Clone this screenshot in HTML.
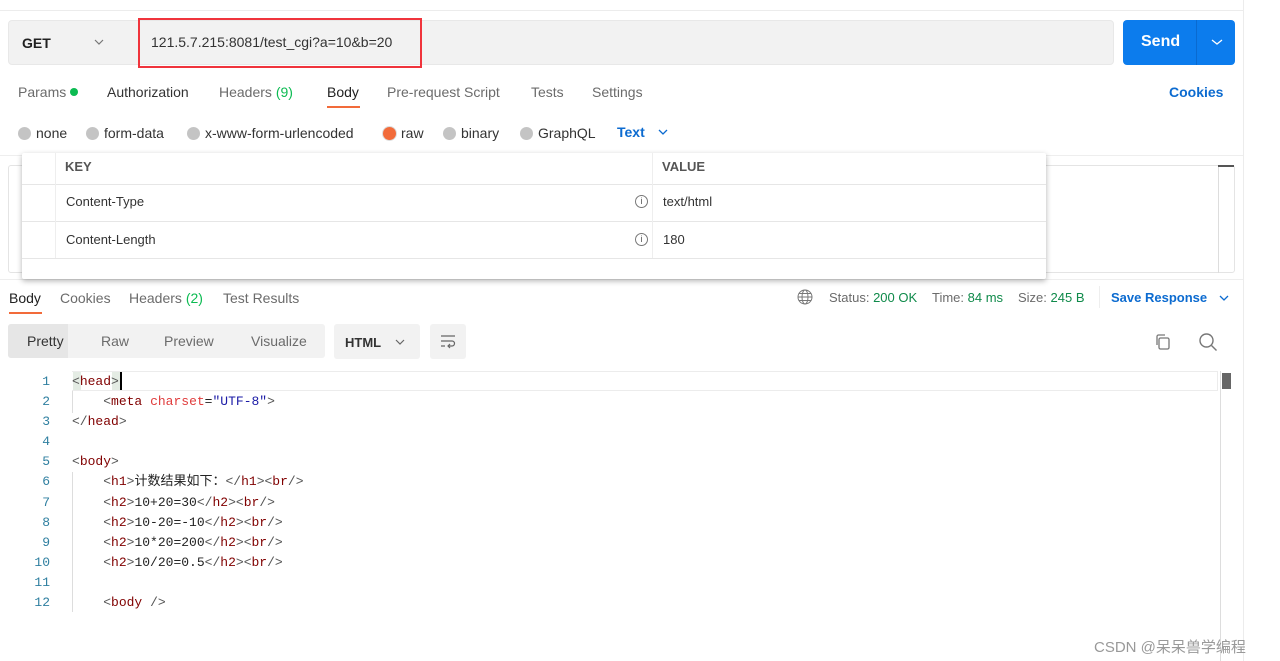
<!DOCTYPE html>
<html><head><meta charset="utf-8"><style>
*{margin:0;padding:0;box-sizing:border-box}
body{width:1280px;height:661px;background:#fff;font-family:"Liberation Sans",sans-serif;font-size:13px;color:#212121;position:relative;overflow:hidden}
.a{position:absolute;white-space:nowrap}
.g{color:#6b6b6b}
.mono{font-family:"Liberation Mono","Noto Sans CJK SC",monospace;font-size:13px}
.dot{display:inline-block;width:13px;height:13px;border-radius:50%;background:#c4c4c4;vertical-align:-2px;margin-right:5px}
.tag{color:#800000}
.p{color:#555}
</style></head><body>
<div class="a" style="left:0;top:10px;width:1243px;height:1px;background:#ececec"></div>
<div class="a" style="left:1243px;top:0;width:1px;height:661px;background:#ececec"></div>
<!-- URL bar -->
<div class="a" style="left:8px;top:20px;width:1106px;height:45px;background:#f2f2f2;border:1px solid #e8e8e8;border-radius:4px"></div>
<div class="a" style="left:22px;top:35px;font-weight:bold;font-size:14px;color:#212121">GET</div>
<svg class="a" style="left:94px;top:38px" width="10" height="8"><path d="M1 2l4 4 4-4" fill="none" stroke="#777" stroke-width="1.2"/></svg>
<div class="a" style="left:138px;top:18px;width:284px;height:50px;border:2px solid #f0343c"></div>
<div class="a" style="left:151px;top:34px;font-size:14px;color:#333">121.5.7.215:8081/test_cgi?a=10&amp;b=20</div>
<div class="a" style="left:1123px;top:20px;width:112px;height:45px;background:#0c7ced;border-radius:4px"></div>
<div class="a" style="left:1196px;top:20px;width:1px;height:45px;background:#0a6ad0"></div>
<div class="a" style="left:1141px;top:33px;font-size:16px;font-weight:bold;color:#fff">Send</div>
<svg class="a" style="left:1211px;top:38px" width="12" height="8"><path d="M1 2l5 4 5-4" fill="none" stroke="#fff" stroke-width="1.3"/></svg>
<!-- tabs -->
<div class="a g" style="left:18px;top:84px;font-size:14px">Params <span style="display:inline-block;width:8px;height:8px;border-radius:50%;background:#0cbb52;vertical-align:1px"></span></div>
<div class="a" style="left:107px;top:84px;font-size:14px;color:#333">Authorization</div>
<div class="a g" style="left:219px;top:84px;font-size:14px">Headers <span style="color:#0cbb52">(9)</span></div>
<div class="a" style="left:327px;top:84px;font-size:14px;color:#212121">Body</div>
<div class="a" style="left:327px;top:106px;width:33px;height:2px;background:#f26b3a"></div>
<div class="a g" style="left:387px;top:84px;font-size:14px">Pre-request Script</div>
<div class="a g" style="left:531px;top:84px;font-size:14px">Tests</div>
<div class="a g" style="left:592px;top:84px;font-size:14px">Settings</div>
<div class="a" style="left:1169px;top:84px;font-size:14px;color:#0c6bd0;font-weight:bold">Cookies</div>
<!-- body types -->
<div class="a" style="left:18px;top:125px;font-size:14px;color:#333"><span class="dot"></span>none</div>
<div class="a" style="left:86px;top:125px;font-size:14px;color:#333"><span class="dot"></span>form-data</div>
<div class="a" style="left:187px;top:125px;font-size:14px;color:#333"><span class="dot"></span>x-www-form-urlencoded</div>
<div class="a" style="left:383px;top:125px;font-size:14px;color:#333"><span class="dot" style="background:#f26b3a;box-shadow:0 0 0 1px #ddd"></span>raw</div>
<div class="a" style="left:443px;top:125px;font-size:14px;color:#333"><span class="dot"></span>binary</div>
<div class="a" style="left:520px;top:125px;font-size:14px;color:#333"><span class="dot"></span>GraphQL</div>
<div class="a" style="left:617px;top:124px;font-size:14px;color:#0c6bd0;font-weight:bold">Text</div>
<svg class="a" style="left:658px;top:128px" width="10" height="8"><path d="M1 2l4 4 4-4" fill="none" stroke="#0c6bd0" stroke-width="1.3"/></svg>
<div class="a" style="left:0;top:155px;width:1243px;height:1px;background:#eee"></div>
<!-- editor bg -->
<div class="a" style="left:8px;top:165px;width:1227px;height:108px;border:1px solid #e4e4e4;border-radius:3px"></div>
<div class="a" style="left:1218px;top:165px;width:1px;height:108px;background:#ddd"></div>
<div class="a" style="left:1218px;top:165px;width:16px;height:2px;background:#555"></div>
<div class="a" style="left:0;top:279px;width:1243px;height:1px;background:#eee"></div>
<!-- popup table -->
<div class="a" style="left:22px;top:153px;width:1024px;height:126px;background:#fff;box-shadow:0 2px 6px rgba(0,0,0,.3);border-radius:2px"></div>
<div class="a" style="left:22px;top:184px;width:1024px;height:1px;background:#e6e6e6"></div>
<div class="a" style="left:22px;top:221px;width:1024px;height:1px;background:#e6e6e6"></div>
<div class="a" style="left:22px;top:258px;width:1024px;height:1px;background:#e6e6e6"></div>
<div class="a" style="left:55px;top:153px;width:1px;height:105px;background:#eee"></div>
<div class="a" style="left:652px;top:153px;width:1px;height:105px;background:#eee"></div>
<div class="a" style="left:65px;top:159px;font-weight:bold;color:#555">KEY</div>
<div class="a" style="left:662px;top:159px;font-weight:bold;color:#555">VALUE</div>
<div class="a" style="left:66px;top:194px;color:#333">Content-Type</div>
<div class="a" style="left:66px;top:232px;color:#333">Content-Length</div>
<div class="a" style="left:663px;top:194px;color:#333">text/html</div>
<div class="a" style="left:663px;top:232px;color:#333">180</div>
<div class="a" style="left:635px;top:195px;width:13px;height:13px;border:1px solid #777;border-radius:50%;font-size:9px;text-align:center;line-height:11px;color:#555">i</div>
<div class="a" style="left:635px;top:233px;width:13px;height:13px;border:1px solid #777;border-radius:50%;font-size:9px;text-align:center;line-height:11px;color:#555">i</div>
<!-- response tabs -->
<div class="a" style="left:9px;top:290px;font-size:14px;color:#212121">Body</div>
<div class="a" style="left:9px;top:312px;width:33px;height:2px;background:#f26b3a"></div>
<div class="a g" style="left:60px;top:290px;font-size:14px">Cookies</div>
<div class="a g" style="left:129px;top:290px;font-size:14px">Headers <span style="color:#0cbb52">(2)</span></div>
<div class="a g" style="left:223px;top:290px;font-size:14px">Test Results</div>
<svg class="a" style="left:797px;top:289px" width="16" height="16"><circle cx="8" cy="8" r="7" fill="none" stroke="#777"/><ellipse cx="8" cy="8" rx="3" ry="7" fill="none" stroke="#777"/><path d="M1 8h14M2 4.5h12M2 11.5h12" stroke="#777"/></svg>
<div class="a g" style="left:829px;top:290px">Status: <span style="color:#0f8a4a">200 OK</span></div>
<div class="a g" style="left:932px;top:290px">Time: <span style="color:#0f8a4a">84 ms</span></div>
<div class="a g" style="left:1018px;top:290px">Size: <span style="color:#0f8a4a">245 B</span></div>
<div class="a" style="left:1099px;top:286px;width:1px;height:22px;background:#eee"></div>
<div class="a" style="left:1111px;top:290px;color:#0c6bd0;font-weight:bold">Save Response</div>
<svg class="a" style="left:1219px;top:294px" width="10" height="8"><path d="M1 2l4 4 4-4" fill="none" stroke="#0c6bd0" stroke-width="1.3"/></svg>
<!-- toolbar -->
<div class="a" style="left:8px;top:324px;width:317px;height:34px;background:#f2f2f2;border-radius:3px"></div>
<div class="a" style="left:8px;top:324px;width:60px;height:34px;background:#e6e6e6;border-radius:3px 0 0 3px"></div>
<div class="a" style="left:27px;top:333px;font-size:14px;color:#333">Pretty</div>
<div class="a g" style="left:101px;top:333px;font-size:14px">Raw</div>
<div class="a g" style="left:164px;top:333px;font-size:14px">Preview</div>
<div class="a g" style="left:251px;top:333px;font-size:14px">Visualize</div>
<div class="a" style="left:334px;top:324px;width:86px;height:35px;background:#f2f2f2;border-radius:3px"></div>
<div class="a" style="left:345px;top:335px;font-weight:bold;color:#333">HTML</div>
<svg class="a" style="left:395px;top:338px" width="10" height="8"><path d="M1 2l4 4 4-4" fill="none" stroke="#666" stroke-width="1.2"/></svg>
<div class="a" style="left:430px;top:324px;width:36px;height:35px;background:#f2f2f2;border-radius:3px"></div>
<svg class="a" style="left:439px;top:333px" width="18" height="16"><path d="M2 3h14M2 8h11a2.5 2.5 0 0 1 0 5h-4M11 11l-2 2 2 2M2 13h4" fill="none" stroke="#666" stroke-width="1.2"/></svg>
<svg class="a" style="left:1154px;top:333px" width="18" height="18"><rect x="5" y="5" width="10" height="11" rx="1.5" fill="none" stroke="#777" stroke-width="1.3"/><path d="M3 12V3.5A1.5 1.5 0 0 1 4.5 2H11" fill="none" stroke="#777" stroke-width="1.3"/></svg>
<svg class="a" style="left:1198px;top:332px" width="20" height="20"><circle cx="8.5" cy="8.5" r="6.5" fill="none" stroke="#777" stroke-width="1.4"/><path d="M13.5 13.5l5 5" stroke="#777" stroke-width="1.4"/></svg>
<!-- code -->
<div class="a" style="left:72px;top:371px;width:1146px;height:20px;border:1px solid #ececec;border-left:none"></div>
<div class="a" style="left:1220px;top:371px;width:1px;height:290px;background:#ddd"></div>
<div class="a" style="left:1222px;top:373px;width:9px;height:16px;background:#666"></div>
<div class="a" style="left:72px;top:391px;width:1px;height:22px;background:#ddd"></div>
<div class="a" style="left:72px;top:472px;width:1px;height:140px;background:#ddd"></div>
<div class="a" style="left:73px;top:372px;width:8px;height:18px;background:#e4ece4"></div>
<div class="a" style="left:112px;top:372px;width:8px;height:18px;background:#e4ece4"></div>
<div class="a" style="left:120px;top:372px;width:2px;height:18px;background:#000"></div>
<div class="a mono" style="left:0;top:372px;width:50px;text-align:right;line-height:20.1px;color:#2f7fa0">1<br>2<br>3<br>4<br>5<br>6<br>7<br>8<br>9<br>10<br>11<br>12</div>
<pre class="a mono" style="left:72px;top:372px;line-height:20.1px;color:#222;white-space:pre"><span class="p">&lt;</span><span class="tag">head</span><span class="p">&gt;</span>
    <span class="p">&lt;</span><span class="tag">meta</span> <span style="color:#e03c3c">charset</span>=<span style="color:#1a1aa6">"UTF-8"</span><span class="p">&gt;</span>
<span class="p">&lt;/</span><span class="tag">head</span><span class="p">&gt;</span>

<span class="p">&lt;</span><span class="tag">body</span><span class="p">&gt;</span>
    <span class="p">&lt;</span><span class="tag">h1</span><span class="p">&gt;</span>计数结果如下：<span class="p">&lt;/</span><span class="tag">h1</span><span class="p">&gt;&lt;</span><span class="tag">br</span><span class="p">/&gt;</span>
    <span class="p">&lt;</span><span class="tag">h2</span><span class="p">&gt;</span>10+20=30<span class="p">&lt;/</span><span class="tag">h2</span><span class="p">&gt;&lt;</span><span class="tag">br</span><span class="p">/&gt;</span>
    <span class="p">&lt;</span><span class="tag">h2</span><span class="p">&gt;</span>10-20=-10<span class="p">&lt;/</span><span class="tag">h2</span><span class="p">&gt;&lt;</span><span class="tag">br</span><span class="p">/&gt;</span>
    <span class="p">&lt;</span><span class="tag">h2</span><span class="p">&gt;</span>10*20=200<span class="p">&lt;/</span><span class="tag">h2</span><span class="p">&gt;&lt;</span><span class="tag">br</span><span class="p">/&gt;</span>
    <span class="p">&lt;</span><span class="tag">h2</span><span class="p">&gt;</span>10/20=0.5<span class="p">&lt;/</span><span class="tag">h2</span><span class="p">&gt;&lt;</span><span class="tag">br</span><span class="p">/&gt;</span>

    <span class="p">&lt;</span><span class="tag">body</span> <span class="p">/&gt;</span></pre>
<div class="a" style="left:1094px;top:636px;font-size:15px;color:#999;font-family:'Liberation Sans','Noto Sans CJK SC',sans-serif">CSDN @呆呆兽学编程</div>
</body></html>
